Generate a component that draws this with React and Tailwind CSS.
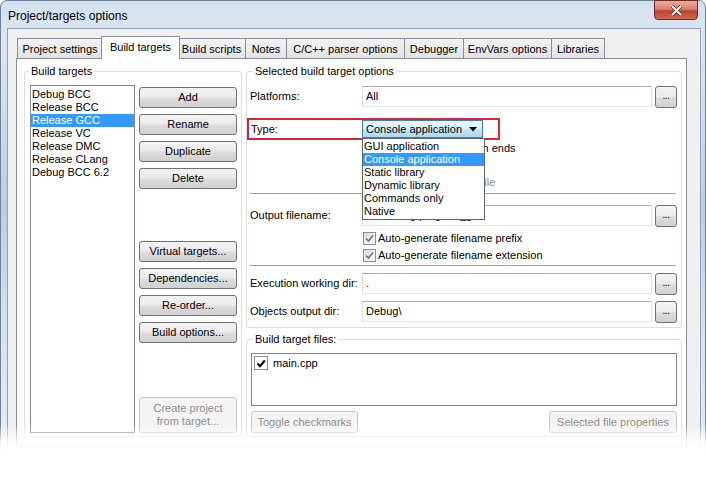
import { useState } from "react";

const tabs = [
  { name: "Project settings", w: "w-[86px]" },
  { name: "Build targets", w: "w-[79px]", active: true },
  { name: "Build scripts", w: "w-[69px]" },
  { name: "Notes", w: "w-[42px]" },
  { name: "C/C++ parser options", w: "w-[119px]" },
  { name: "Debugger", w: "w-[60px]" },
  { name: "EnvVars options", w: "w-[89px]" },
  { name: "Libraries", w: "w-[54px]" },
];

const targets = [
  "Debug BCC",
  "Release BCC",
  "Release GCC",
  "Release VC",
  "Release DMC",
  "Release CLang",
  "Debug BCC 6.2",
];

const types = [
  "GUI application",
  "Console application",
  "Static library",
  "Dynamic library",
  "Commands only",
  "Native",
];

function Btn({ children, className = "", disabled }) {
  return (
    <div
      className={`flex items-center justify-center rounded-[3px] border text-center leading-[13px] ${
        disabled
          ? "border-[#c5c9cc] bg-[#f4f4f4] text-[#8d8d8d]"
          : "border-[#707070] bg-[linear-gradient(180deg,#f3f3f3_0%,#ebebeb_48%,#dddddd_52%,#d0d0d0_100%)] text-black"
      } ${className}`}
    >
      {children}
    </div>
  );
}

function Input({ children, className = "w-[290px]" }) {
  return (
    <div
      className={`flex h-[21px] items-center overflow-hidden border border-[#abadb3] border-x-[#dbdfe6] border-b-[#e3e9ef] bg-white pl-[3px] ${className}`}
    >
      {children}
    </div>
  );
}

function Dots() {
  return (
    <Btn className="ml-[3px] h-[22px] w-[22px] pb-[3px] text-[10px] tracking-[-0.5px]">
      ...
    </Btn>
  );
}

function Check({ label, disabled }) {
  return (
    <div className="flex h-[17px] items-center pl-[113px]">
      <div className="flex h-[13px] w-[13px] items-center justify-center border border-[#8e8f8f] bg-[linear-gradient(135deg,#dcdcdc,#fbfbfb)]">
        {label && !disabled && label.startsWith("Auto") && (
          <svg width="9" height="9" viewBox="0 0 9 9">
            <path d="M1 4.5 L3.5 7 L8 1.5" stroke="#5d6f94" strokeWidth="1.6" fill="none" />
          </svg>
        )}
      </div>
      <span className={`ml-[2px] whitespace-nowrap ${disabled ? "text-[#8d8d8d]" : ""}`}>{label}</span>
    </div>
  );
}

function Row({ label, value, className = "" }) {
  return (
    <div className={`flex h-[21px] items-center ${className}`}>
      <div className="w-[112px]">{label}</div>
      <Input>{value}</Input>
      <Dots />
    </div>
  );
}

export default function App() {
  const [selected] = useState(2);

  return (
    <div className="relative h-[489px] w-[706px] overflow-hidden bg-white font-['Liberation_Sans',Arial,sans-serif] text-[11px] leading-[13px] text-black">
      {/* window */}
      <div className="h-[456px] w-[706px] rounded-t-[7px] border border-[#6f8198] bg-[linear-gradient(180deg,#d3e0ef_0%,#dde7f3_8%,#cad9eb_30%,#b9cde4_45%,#d4e1ef_70%,#e6edf5_100%)] px-[6px]">
        {/* title bar */}
        <div className="flex h-[27px] items-start justify-between">
          <div className="pl-[1px] pt-[8px] text-[12px] leading-[14px] text-black">
            Project/targets options
          </div>
          <div className="-mt-px mr-[1px] flex h-[20px] w-[44px] items-center justify-center rounded-b-[4px] border border-[#6b2a24] bg-[linear-gradient(180deg,#e9aaa0_0%,#d98272_45%,#c2412e_55%,#cf6a50_100%)]">
            <svg width="13" height="11" viewBox="0 0 13 11">
              <path d="M2 1 L11 10 M11 1 L2 10" stroke="#4a1d18" strokeWidth="3.4" />
              <path d="M2 1 L11 10 M11 1 L2 10" stroke="#ffffff" strokeWidth="2" />
            </svg>
          </div>
        </div>

        {/* client */}
        <div className="h-[440px] w-[694px] border border-[#8fa2ba] bg-[#f0f0f0] pl-[8px] pt-[7px]">
          {/* tabs */}
          <div className="flex h-[22px] items-end pl-[2px]">
            {tabs.map((t) =>
              t.active ? (
                <div
                  key={t.name}
                  className={`relative z-10 -mx-[2px] -mb-px flex h-[23px] items-start justify-center border border-b-0 border-[#898c95] bg-white pt-[4px] ${t.w}`}
                >
                  {t.name}
                </div>
              ) : (
                <div
                  key={t.name}
                  className={`-ml-px flex h-[20px] items-center justify-center border border-b-0 border-[#898c95] bg-[linear-gradient(180deg,#f2f2f2,#e3e3e3)] pt-[1px] ${t.w}`}
                >
                  {t.name}
                </div>
              )
            )}
          </div>

          {/* panel */}
          <div className="flex h-[390px] w-[671px] gap-[4px] border border-[#898c95] bg-white pl-[7px] pt-[6px]">
            {/* left group */}
            <fieldset className="h-[372px] w-[218px] rounded-[3px] border border-[#d5dfe5] pb-[3px] pl-[5px] pr-[4px]">
              <legend className="-ml-[1px] px-[2px]">Build targets</legend>
              <div className="flex gap-[4px] pt-[7px]">
                <div className="h-[348px] w-[105px] border border-[#828790] pt-[2px]">
                  {targets.map((t, i) => (
                    <div
                      key={t}
                      className={`h-[13px] pl-[1px] ${i === selected ? "bg-[#3399ff] text-white" : ""}`}
                    >
                      {t}
                    </div>
                  ))}
                </div>
                <div className="flex w-[98px] flex-col pt-[2px]">
                  <div className="flex flex-col gap-[6px]">
                    <Btn className="h-[21px]">Add</Btn>
                    <Btn className="h-[21px]">Rename</Btn>
                    <Btn className="h-[21px]">Duplicate</Btn>
                    <Btn className="h-[21px]">Delete</Btn>
                  </div>
                  <div className="mt-[52px] flex flex-col gap-[6px]">
                    <Btn className="h-[21px]">Virtual targets...</Btn>
                    <Btn className="h-[21px]">Dependencies...</Btn>
                    <Btn className="h-[21px]">Re-order...</Btn>
                    <Btn className="h-[21px]">Build options...</Btn>
                  </div>
                  <Btn disabled className="mt-[54px] h-[36px]">
                    Create project
                    <br />
                    from target...
                  </Btn>
                </div>
              </div>
            </fieldset>

            {/* right column */}
            <div className="flex w-[436px] flex-col">
              <fieldset className="rounded-[3px] border border-[#d5dfe5] pb-[5px] pl-[3px] pr-[4px]">
                <legend className="ml-[3px] px-[2px]">Selected build target options</legend>
                <Row label="Platforms:" value="All" className="mt-[8px]" />

                {/* type row with red annotation */}
                <div className="relative z-20 -ml-[3px] mt-[11px] flex h-[22px] w-[253px] items-center border-2 border-[#d9252b]">
                  <div className="w-[113px] pl-[2px]">Type:</div>
                  <div className="relative">
                    <div className="flex h-[18px] w-[121px] items-center justify-between border border-[#3c7fb1] bg-[linear-gradient(180deg,#eaf6fd_0%,#d9f0fc_48%,#bee6fd_52%,#a7d9f5_100%)] pl-[3px] pr-[5px]">
                      <span>Console application</span>
                      <svg width="8" height="5" viewBox="0 0 8 5">
                        <path d="M0 0 H8 L4 4.5 Z" fill="#000" />
                      </svg>
                    </div>
                    <div className="absolute left-0 top-full w-[123px] border border-[#646464] bg-white py-[1px]">
                      {types.map((t, i) => (
                        <div
                          key={t}
                          className={`h-[13px] pl-[1px] ${i === 1 ? "bg-[#3399ff] text-white" : ""}`}
                        >
                          {t}
                        </div>
                      ))}
                    </div>
                  </div>
                </div>

                <Check label="Pause when execution ends" />
                <Check label="Create import library" disabled />
                <Check label="Create .DEF exports file" disabled />
                <div className="mr-[1px] mt-[2px] border-t border-[#a0a0a0]" />

                <Row label="Output filename:" value="bin\Debug\program_gcc" className="mt-[11px]" />
                <div className="mt-[4px]">
                  <Check label="Auto-generate filename prefix" />
                  <Check label="Auto-generate filename extension" />
                </div>
                <div className="mr-[1px] mt-[1px] border-t border-[#a0a0a0]" />

                <Row label="Execution working dir:" value="." className="mt-[7px]" />
                <Row label="Objects output dir:" value="Debug\" className="mt-[7px]" />
              </fieldset>

              <fieldset className="mt-[5px] rounded-[3px] border border-[#d5dfe5] pb-[3px] pl-[4px] pr-[4px]">
                <legend className="ml-[2px] px-[2px]">Build target files:</legend>
                <div className="mt-[7px] h-[53px] w-[426px] border border-[#828790] pl-[2px] pt-[2px]">
                  <div className="flex items-center">
                    <div className="flex h-[14px] w-[14px] items-center justify-center border border-[#8e8f8f] bg-white">
                      <svg width="10" height="9" viewBox="0 0 10 9">
                        <path d="M1.5 4.5 L4 7.2 L8.8 1.5" stroke="#000" strokeWidth="2" fill="none" />
                      </svg>
                    </div>
                    <span className="ml-[5px]">main.cpp</span>
                  </div>
                </div>
                <div className="mt-[5px] flex justify-between">
                  <Btn disabled className="h-[22px] w-[107px]">
                    Toggle checkmarks
                  </Btn>
                  <Btn disabled className="h-[22px] w-[128px]">
                    Selected file properties
                  </Btn>
                </div>
              </fieldset>
            </div>
          </div>
        </div>
      </div>

      {/* fade to white at the bottom */}
      <div className="pointer-events-none absolute left-0 top-[424px] h-[26px] w-full bg-[linear-gradient(180deg,rgba(255,255,255,0)_0%,rgba(255,255,255,0.8)_60%,#ffffff_100%)]" />
      <div className="absolute left-0 top-[450px] h-[39px] w-full bg-white" />
    </div>
  );
}
